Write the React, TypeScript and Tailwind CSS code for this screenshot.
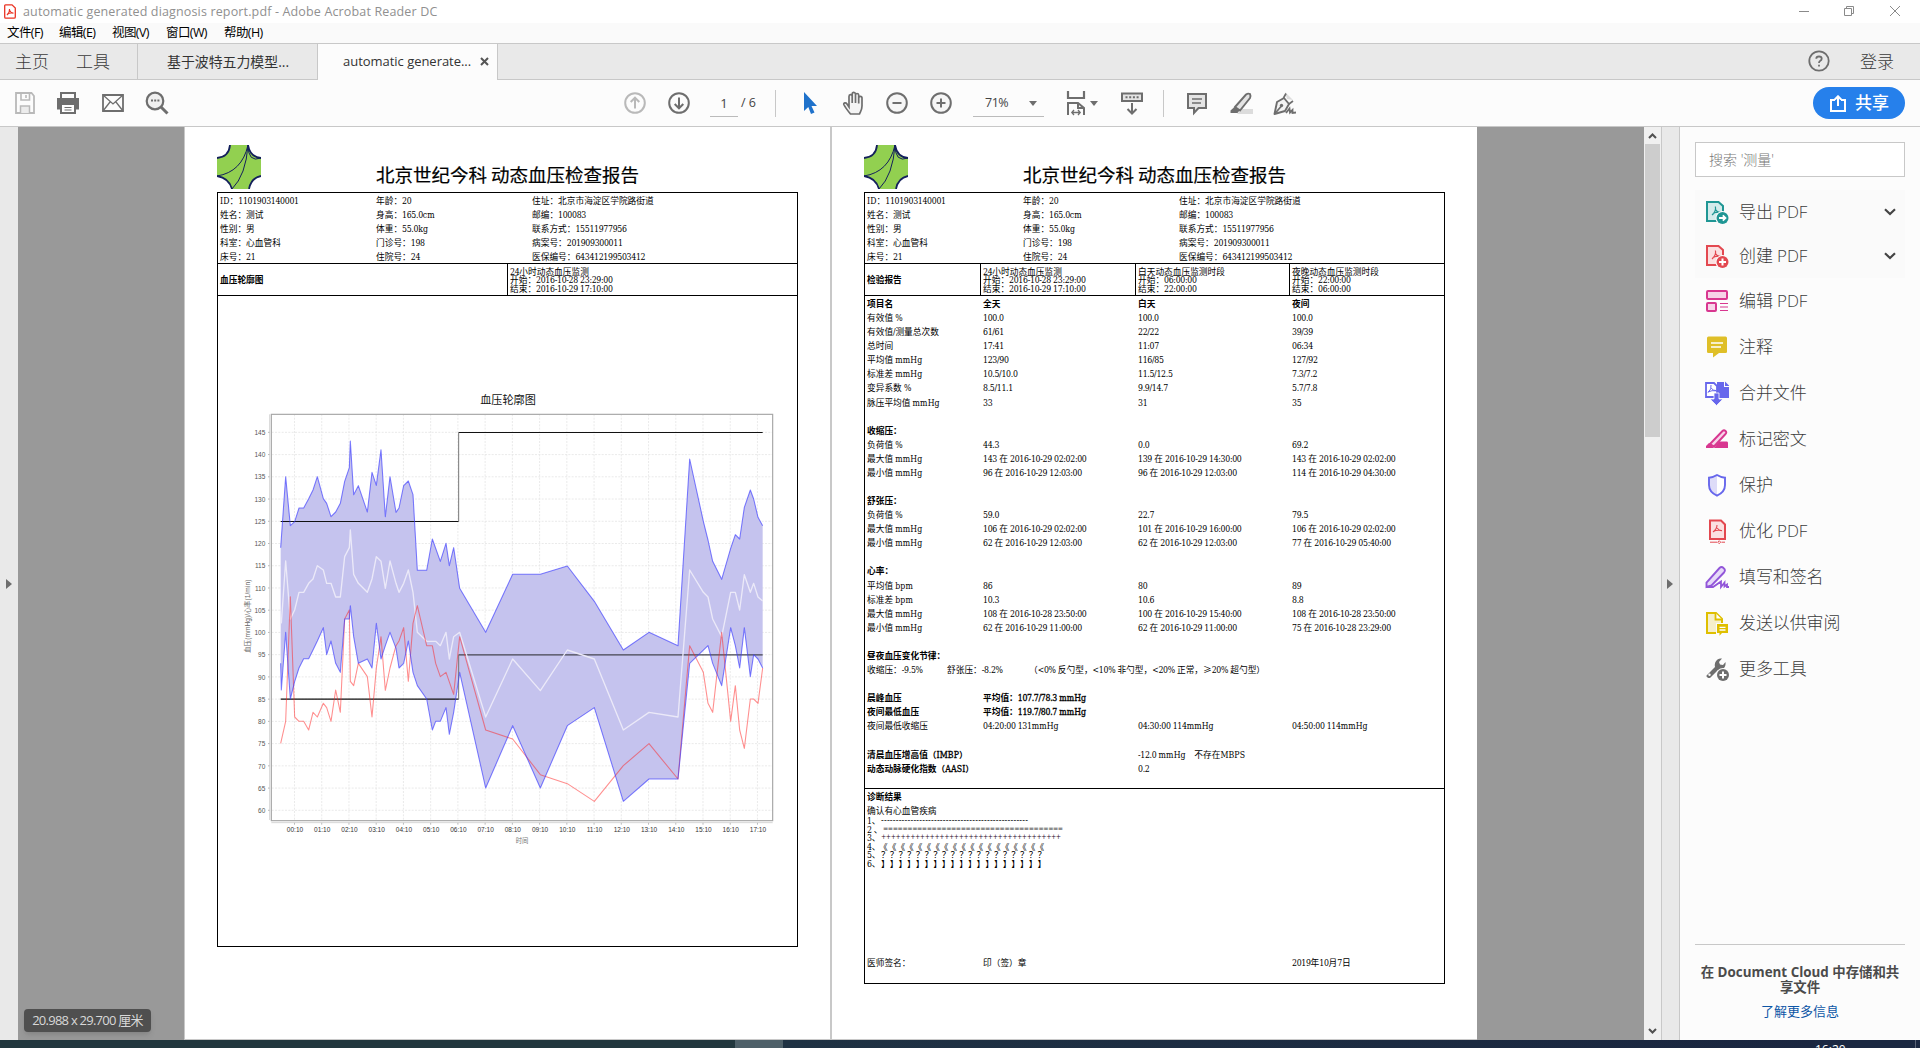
import React from "react";

const UI = "font-['Open_Sans','Noto_Sans_CJK_SC',sans-serif]";
const LATIN = "font-['DejaVu_Serif_Condensed','DejaVu_Serif',serif] [font-stretch:condensed] font-normal";

/* Latin runs in the report use a serif face, Chinese runs a sans face. */
function R({ t, b }: { t: string; b?: boolean }) {
  const parts = t.match(/[A-Za-z]+|[\x20-\x40\x5b-\x60\x7b-\x7e]+|[^\x20-\x7e]+/g) || [];
  return (
    <span className={"whitespace-pre [text-spacing-trim:space-all] " + (b ? "font-semibold" : "")}>
      {parts.map((p, i) =>
        /^[\x20-\x7e]/.test(p) ? (
          <span
            key={i}
            className={
              LATIN +
              " text-[8.7px] " +
              (/^[A-Za-z]/.test(p) ? "tracking-[0.1px]" : "tracking-[-0.32px]") +
              (b ? " [-webkit-text-stroke:0.3px_#000]" : "")
            }
          >
            {p}
          </span>
        ) : (
          <span key={i}>{p}</span>
        )
      )}
    </span>
  );
}

function Logo() {
  return (
    <svg width="44" height="44" viewBox="0 0 44 44" className="block shrink-0">
      <path d="M13 0H31Q33 12 44 13V31Q34 33 32 44H15Q12 33 0 31V13Q12 11 13 0Z" fill="#92d050" />
      <g fill="none" stroke="#14205c" strokeWidth="1.3">
        <path d="M13 0Q12 12 0 13M31 0Q33 12 44 13M44 31Q34 33 32 44M15 44Q12 33 0 31" strokeWidth="1.8" />
        <path d="M31 0Q29 30 15 44M31 0Q25 27 0 31M31 0Q31 18 44 13" strokeWidth="1" />
      </g>
    </svg>
  );
}

const patient = [
  ["ID：1101903140001", "年龄：20", "住址：北京市海淀区学院路街道"],
  ["姓名：测试", "身高：165.0cm", "邮编：100083"],
  ["性别：男", "体重：55.0kg", "联系方式：15511977956"],
  ["科室：心血管科", "门诊号：198", "病案号：201909300011"],
  ["床号：21", "住院号：24", "医保编号：643412199503412"],
];

function PageHead() {
  return (
    <div className="flex h-[65px] pt-[18px]">
      <Logo />
      <h1 className="mr-[44px] flex-1 pt-[13px] text-center text-[18.5px] font-normal leading-[32px] [-webkit-text-stroke:0.2px_#000]">北京世纪今科 动态血压检查报告</h1>
    </div>
  );
}

function Patient() {
  return (
    <div className="h-[71px] border-b border-black pl-[2px] pt-[1px]">
      {patient.map((r) => (
        <div key={r[0]} className="grid h-[14px] grid-cols-[156px_156px_1fr] leading-[14px]">
          {r.map((c) => (
            <R key={c} t={c} />
          ))}
        </div>
      ))}
    </div>
  );
}

function Period({ lines }: { lines: string[] }) {
  return (
    <div className="flex flex-col border-l border-black pl-[2px] pt-[3.5px] leading-[8.8px]">
      {lines.map((l) => (
        <R key={l} t={l} />
      ))}
    </div>
  );
}

const sys = "122,503 137,290 151,437 164,425 177,384 191,384 206,356 219,330 232,290 250,356 260,370 273,410 287,396 301,370 314,304 328,263 331,183 341,344 355,317 382,396 396,277 409,316 423,209 436,410 450,290 468,397 477,384 491,317 505,303 519,344 532,571 560,571 577,477 601,544 618,490 628,557 641,503 659,625 737,757 818,583 901,583 982,558 1063,664 1150,810 1227,757 1314,797 1349,237 1390,424 1404,480 1418,544 1445,598 1472,505 1486,464 1499,477 1513,382 1531,330 1541,357 1554,412 1568,437";
const dia = "122,850 124,930 137,757 151,957 164,905 177,864 191,836 206,836 219,810 232,783 250,743 260,824 273,783 287,850 301,877 314,717 328,717 331,677 341,770 355,850 382,837 396,864 409,730 423,837 436,797 450,757 468,805 477,864 491,850 505,783 519,877 532,917 560,957 577,1050 587,1024 601,1024 618,983 628,1063 641,997 659,877 737,1224 818,1037 901,1224 982,1037 1063,983 1150,1264 1227,1197 1314,1197 1349,850 1404,797 1418,850 1445,917 1472,743 1486,797 1499,864 1513,743 1531,890 1541,824 1554,837 1568,864";
const mean = "124,730 137,543 151,717 164,690 177,637 191,637 206,610 219,597 232,557 250,570 260,610 273,610 287,651 301,651 314,530 328,503 331,450 341,583 355,610 382,637 396,597 409,530 423,544 436,625 450,543 468,610 477,637 491,610 505,570 519,637 532,757 560,784 587,784 601,797 618,757 628,837 641,770 659,757 737,1011 818,837 901,932 982,810 1063,837 1150,1050 1227,997 1314,1011 1349,570 1390,637 1404,651 1418,717 1445,770 1472,637 1486,637 1499,690 1513,584 1531,637 1541,610 1554,651 1568,663";
const rate = "122,1090 137,1024 151,650 164,1011 177,1024 191,1024 206,1050 219,997 232,1011 250,970 260,983 273,1024 287,930 301,997 314,717 328,690 331,904 341,917 355,850 382,890 396,1011 409,864 423,770 436,931 450,864 468,797 477,783 491,743 505,904 519,730 532,677 560,797 577,797 587,850 601,890 618,877 641,943 659,770 737,1050 818,1077 901,1184 982,1211 1063,1264 1150,1157 1227,1091 1314,1197 1349,797 1390,877 1404,970 1418,997 1445,757 1472,1024 1486,917 1499,1050 1513,1105 1531,957 1541,957 1554,970 1568,864";
const hours = ["00:10", "01:10", "02:10", "03:10", "04:10", "05:10", "06:10", "07:10", "08:10", "09:10", "10:10", "11:10", "12:10", "13:10", "14:10", "15:10", "16:10", "17:10"];
const levels = [145, 140, 135, 130, 125, 120, 115, 110, 105, 100, 95, 90, 85, 80, 75, 70, 65, 60];

function Chart() {
  return (
    <svg width="540" height="480" viewBox="0 0 1620 1440" className="ml-[22px] mt-[84px] block font-['Liberation_Sans','Noto_Sans_CJK_SC',sans-serif]">
      <text x="804" y="73" textAnchor="middle" fontSize="33.400" fill="#111" className="font-['Noto_Sans_CJK_SC',sans-serif]">血压轮廓图</text>
      {levels.map((v, i) => (
        <g key={v}>
          <path d={`M95 ${157 + i * 66.7}H1598`} stroke="#e6e6e6" strokeWidth="2.5" strokeDasharray="6 4" />
          <path d={`M84 ${157 + i * 66.7}H90`} stroke="#aaa" strokeWidth="2.5" />
          <text x="76" y={165 + i * 66.7} textAnchor="end" fontSize="19.5" fill="#555">{v}</text>
        </g>
      ))}
      {hours.map((h, i) => (
        <g key={h}>
          <path d={`M${163.5 + i * 81.7} 103V1322`} stroke="#e6e6e6" strokeWidth="2.5" strokeDasharray="6 4" />
          <path d={`M${163.5 + i * 81.7} 1328V1334`} stroke="#aaa" strokeWidth="2.5" />
          <text x={165 + i * 81.7} y="1355" textAnchor="middle" fontSize="19.5" fill="#333">{h}</text>
        </g>
      ))}
      <path d="M89 103V1320M94 1328H1598" stroke="#ccc" strokeWidth="2.5" />
      <rect x="94" y="103" width="1504" height="1219" fill="none" stroke="#a6a6a6" strokeWidth="3.5" />
      <polygon points={sys + " " + dia.split(" ").reverse().join(" ")} fill="#c5c3ee" />
      <g fill="none" strokeLinejoin="round">
        <path d="M122 424.5H656M656 157.5H1568M122 957.5H656" stroke="#111" strokeWidth="3.5" />
        <path d="M656 824.5H1568" stroke="#45454f" strokeWidth="4" />
        <path d="M656 424V157M656 957V824" stroke="#777" strokeWidth="3" />
        <polyline points={mean} stroke="#ebe9f8" strokeWidth="4" />
        <polyline points={rate} stroke="#ff2020" strokeOpacity=".5" strokeWidth="3.2" />
        <polyline points={sys} stroke="#3a3aff" strokeOpacity=".65" strokeWidth="3.2" />
        <polyline points={dia} stroke="#3a3aff" strokeOpacity=".65" strokeWidth="3.2" />
      </g>
      <text x="846" y="1388" textAnchor="middle" fontSize="19" fill="#777">时间</text>
      <text transform="translate(30 709) rotate(-90)" textAnchor="middle" fontSize="19.5" textLength="220" fill="#666">血压(mmHg)/心率(1/min)</text>
    </svg>
  );
}

type Row = { c?: string[]; b?: boolean; b2?: boolean };
const rows: Row[] = [
  { c: ["项目名", "全天", "白天", "夜间"], b: true, b2: true },
  { c: ["有效值 %", "100.0", "100.0", "100.0"] },
  { c: ["有效值/测量总次数", "61/61", "22/22", "39/39"] },
  { c: ["总时间", "17:41", "11:07", "06:34"] },
  { c: ["平均值 mmHg", "123/90", "116/85", "127/92"] },
  { c: ["标准差 mmHg", "10.5/10.0", "11.5/12.5", "7.3/7.2"] },
  { c: ["变异系数 %", "8.5/11.1", "9.9/14.7", "5.7/7.8"] },
  { c: ["脉压平均值 mmHg", "33", "31", "35"] },
  {},
  { c: ["收缩压："], b: true },
  { c: ["负荷值 %", "44.3", "0.0", "69.2"] },
  { c: ["最大值 mmHg", "143 在 2016-10-29 02:02:00", "139 在 2016-10-29 14:30:00", "143 在 2016-10-29 02:02:00"] },
  { c: ["最小值 mmHg", "96 在 2016-10-29 12:03:00", "96 在 2016-10-29 12:03:00", "114 在 2016-10-29 04:30:00"] },
  {},
  { c: ["舒张压："], b: true },
  { c: ["负荷值 %", "59.0", "22.7", "79.5"] },
  { c: ["最大值 mmHg", "106 在 2016-10-29 02:02:00", "101 在 2016-10-29 16:00:00", "106 在 2016-10-29 02:02:00"] },
  { c: ["最小值 mmHg", "62 在 2016-10-29 12:03:00", "62 在 2016-10-29 12:03:00", "77 在 2016-10-29 05:40:00"] },
  {},
  { c: ["心率："], b: true },
  { c: ["平均值 bpm", "86", "80", "89"] },
  { c: ["标准差 bpm", "10.3", "10.6", "8.8"] },
  { c: ["最大值 mmHg", "108 在 2016-10-28 23:50:00", "100 在 2016-10-29 15:40:00", "108 在 2016-10-28 23:50:00"] },
  { c: ["最小值 mmHg", "62 在 2016-10-29 11:00:00", "62 在 2016-10-29 11:00:00", "75 在 2016-10-28 23:29:00"] },
  {},
  { c: ["昼夜血压变化节律："], b: true },
  { c: ["RHYTHM"] },
  {},
  { c: ["晨峰血压", "平均值：107.7/78.3 mmHg"], b: true, b2: true },
  { c: ["夜间最低血压", "平均值：119.7/80.7 mmHg"], b: true, b2: true },
  { c: ["夜间最低收缩压", "04:20:00 131mmHg", "04:30:00 114mmHg", "04:50:00 114mmHg"] },
  {},
  { c: ["清晨血压增高值（IMBP）", "", "-12.0 mmHg　不存在MBPS"], b: true },
  { c: ["动态动脉硬化指数（AASI）", "", "0.2"], b: true },
];

const notes: [string, string, string][] = [
  ["1、", "-".repeat(50), "tracking-[0.21px] pl-[14px] text-[9px] font-['DejaVu_Serif_Condensed','DejaVu_Serif',serif] [font-stretch:condensed]"],
  ["2 、", "=".repeat(37), "tracking-[-0.42px] pl-[16px] text-[7px] text-[#333] font-['DejaVu_Serif_Condensed','DejaVu_Serif',serif] [font-stretch:condensed]"],
  ["3、", "+".repeat(37), "tracking-[-0.42px] pl-[14px] text-[7px] text-[#2a0a2a] font-['DejaVu_Serif_Condensed','DejaVu_Serif',serif] [font-stretch:condensed]"],
  ["4、", "《".repeat(19), "pl-[12px]"],
  ["5、", "？".repeat(19), "pl-[14px]"],
  ["6、", "】".repeat(19), "pl-[14px]"],
];

function ReportTable() {
  return (
    <>
      <div className="h-[493px] border-b border-black pl-[2px] pt-[1px]">
        {rows.map((r, i) => (
          <div key={i} className="grid h-[14.09px] grid-cols-[116px_155px_154px_1fr] leading-[14px]">
            {r.c && r.c[0] === "RHYTHM" ? (
              <div className="col-span-4 flex">
                <span className="w-[80px]"><R t="收缩压：-9.5%" /></span>
                <span className="w-[82px]"><R t="舒张压：-8.2%" /></span>
                <R t="（<0% 反勺型，<10% 非勺型，<20% 正常，≥20% 超勺型）" />
              </div>
            ) : (
              r.c?.map((c, j) => (
                <div key={j} className="w-0">
                  <R t={c} b={(j === 0 && r.b) || r.b2} />
                </div>
              ))
            )}
          </div>
        ))}
      </div>
      <div className="h-[194px] pl-[2px] pt-[1px] leading-[14px]">
        <div className="h-[14px]"><R t="诊断结果" b /></div>
        <div className="h-[12px]"><R t="确认有心血管疾病" /></div>
        {notes.map(([n, s, k], i) => (
          <div key={n} className="grid h-[8.6px] leading-[9px]">
            <span className="col-start-1 row-start-1"><R t={n} /></span>
            <span className={"col-start-1 row-start-1 whitespace-pre " + k}>{i < 3 ? s : <R t={s} />}</span>
          </div>
        ))}
        <div className="mt-[88px] grid h-[14px] grid-cols-[116px_309px_1fr]">
          <R t="医师签名：" />
          <R t="印（签）章" />
          <R t="2019年10月7日" />
        </div>
      </div>
    </>
  );
}

/* ---------- Tool panel icons ---------- */
const acro = "M7 15C10 12.5 11 9.5 10.4 6.5M10.8 9.8C12 12 14 13 16.5 12.6M8 13.5C10 12.3 13 11.8 15.5 12.2";

const tools: { t: string; icon: React.ReactNode; h: string; more?: boolean }[] = [
  { t: "导出 PDF", h: "h-[44px]", more: true, icon: (<>
    <path d="M2 2H13.500L18 6V21H2Z" fill="#d3ebeb" stroke="#1f9694" strokeWidth="2" /><path d={acro} fill="none" stroke="#1f9694" strokeWidth="1.2" />
    <circle cx="17.500" cy="18" r="7" fill="#fbfbfb" /><circle cx="17.500" cy="18" r="6" fill="#1f9694" /><path d="M14 18H20M17.800 15.300L20.500 18L17.800 20.700" stroke="#fff" strokeWidth="1.800" fill="none" /></>) },
  { t: "创建 PDF", h: "h-[44px]", more: true, icon: (<>
    <path d="M2 2H13.500L18 6V21H2Z" fill="#fbe0e1" stroke="#e34850" strokeWidth="2" /><path d={acro} fill="none" stroke="#e34850" strokeWidth="1.2" />
    <circle cx="17.500" cy="18" r="7" fill="#fbfbfb" /><circle cx="17.500" cy="18" r="6" fill="#e34850" /><path d="M14 18H21M17.500 14.500V21.500" stroke="#fff" strokeWidth="2" /></>) },
  { t: "编辑 PDF", h: "h-[46px]", icon: (<g fill="#f7d3e8" stroke="#d83790" strokeWidth="2">
    <rect x="2" y="2" width="20" height="8" rx="1" /><rect x="2" y="14" width="9" height="8" rx="1" /><path d="M15 14.500H23M15 18H23M15 21.500H23" strokeWidth="1.200" /></g>) },
  { t: "注释", h: "h-[46px]", icon: (<>
    <path d="M3.500 1.500H20.500Q22 1.500 22 3V17Q22 18 20.500 18H14L8 22.500V18H3.500Q2 18 2 17V3Q2 1.500 3.500 1.500Z" fill="#dfbf28" /><path d="M6 8H18M6 12H16" stroke="#fff" strokeWidth="1.500" /></>) },
  { t: "合并文件", h: "h-[46px]", icon: (<>
    <path d="M12 1H19V6H24V17H12Z" fill="#6767ec" /><path d="M20 0.500L24 4.500V5H20Z" fill="#6767ec" /><path d="M1 2H9L12 5V16H1Z" fill="#fff" stroke="#6767ec" strokeWidth="1.800" /><path d="M3 11.500Q7 8 6 4M6.200 7Q8 10 11 9.500M3 11Q7 9 11 9.800" stroke="#6767ec" fill="none" />
    <path d="M9 12H14V18H18L11.500 24.500L5 18H9Z" fill="#6767ec" stroke="#fbfbfb" strokeWidth=".8" /></>) },
  { t: "标记密文", h: "h-[46px]", icon: (<>
    <path d="M9 21L14 14.500H22Q23 14.500 23 16V21Z" fill="#d83790" /><path d="M5 17L17.500 4Q19 2.500 20.500 4Q22 5.500 20.500 7L9 19.500Z" fill="#f7d3e8" stroke="#d83790" strokeWidth="1.900" /><path d="M1 21V19L4 16L9 20.500L8 21Z" fill="#d83790" /></>) },
  { t: "保护", h: "h-[46px]", icon: (<>
    <path d="M12 2L20 5V12Q20 19 12 22.500Q4 19 4 12V5Z" fill="#fff" /><path d="M12 2L4 5V12Q4 19 12 22.500Z" fill="#dedcf8" /><path d="M12 2Q16 4.500 20 4.700V12Q20 19 12 22.700Q4 19 4 12V4.700Q8 4.500 12 2Z" fill="none" stroke="#6767ec" strokeWidth="1.900" /></>) },
  { t: "优化 PDF", h: "h-[46px]", icon: (<>
    <path d="M5 1.500H16L20 5.500V20H5Z" fill="#fbe0e1" stroke="#e34850" strokeWidth="2" /><path d="M8 13Q12 10 12 6M12.200 9Q14 12 17 11.500M8 12.700Q12 10.500 17 11.700" stroke="#e34850" fill="none" strokeWidth="1.100" /><path d="M5 23.200H12M16.500 23.200H20M14.200 21.700L15.700 23.200L14.200 24.700L12.700 23.200Z" stroke="#e34850" fill="none" /></>) },
  { t: "填写和签名", h: "h-[46px]", icon: (<>
    <path d="M1.500 22V17.500L14.500 3Q16.500 1 18.500 3Q21 5 19 7.500L6.500 20.500Z" fill="#e6d9f8" stroke="#9256d9" strokeWidth="1.900" /><path d="M1 22H8L16 16.500V22L19.500 17.500V21.500L22 19.500V22H24" fill="none" stroke="#9256d9" strokeWidth="1.800" /></>) },
  { t: "发送以供审阅", h: "h-[46px]", icon: (<>
    <path d="M2 2H11L17 8V22H2Z" fill="#f6efcc" stroke="#dfbf00" strokeWidth="2" /><path d="M10.500 2V8.500H17" fill="#fff" stroke="#dfbf00" strokeWidth="1.800" /><rect x="11" y="12" width="13" height="11" fill="#fbfbfb" /><path d="M12 13H23V22H17L14.500 24.800V22H12Z" fill="#dfbf00" /><path d="M14.500 16.300H20.500M14.500 19H20.500" stroke="#fff" strokeWidth="1.300" /></>) },
  { t: "更多工具", h: "h-[46px]", icon: (<>
    <path d="M1.500 18.500L10 10Q9 5 12.500 2.500Q14.500 1 17 1.500L14 5L15 7.500L18 8L20.500 5Q21 9 18.500 11.500Q16 13.500 13 13L5.500 20.500Q4 21.500 2.500 20.500Q1 19.500 1.500 18.500Z" fill="#6e6e6e" /><circle cx="4.500" cy="17.800" r="1.200" fill="#fbfbfb" /><circle cx="18" cy="18" r="7" fill="#fbfbfb" /><circle cx="18" cy="18" r="6" fill="#6e6e6e" /><path d="M14.500 18H21.500M18 14.500V21.500" stroke="#fff" strokeWidth="2" /></>) },
];

function Ic({ w = 24, h = 26, className, children }: { w?: number; h?: number; className?: string; children: React.ReactNode }) {
  return (
    <svg width={w} height={h} viewBox={`0 0 ${w} ${h}`} fill="none" stroke="#6e6e6e" strokeWidth="2" className={"block shrink-0 " + (className || "")}>
      {children}
    </svg>
  );
}

export default function App() {
  return (
    <div className={"flex h-[1048px] w-[1920px] flex-col overflow-hidden bg-white text-[#444] " + UI}>
      {/* Title bar */}
      <div className="flex h-[23px] shrink-0 items-center bg-white pl-[4px]">
        <svg width="12" height="15" viewBox="0 0 12 15" className="mr-[7px] shrink-0" fill="none" stroke="#ea3323">
          <path d="M1.600 .8H8L11.300 4V13Q11.300 14.200 10 14.200H1.600Q.7 14.200 .7 13V2Q.7 .8 1.600 .8Z" strokeWidth="1.300" />
          <path d="M3 11Q6 8 5.500 5M5.700 6.500Q7 9.200 9.500 9M3 10.500Q6 8.500 9.500 9.300" strokeWidth="1.100" />
        </svg>
        <span className="whitespace-nowrap text-[12.5px] leading-[20px] tracking-[0.15px] text-[#909090]">automatic generated diagnosis report.pdf - Adobe Acrobat Reader DC</span>
        <svg width="104" height="12" viewBox="0 0 104 12" className="ml-auto mr-[18px] -mt-[2px]" fill="none" stroke="#8a8a8a">
          <path d="M1 6.500H11M46.500 3.500H53.500V10.500H46.500ZM48.500 3.500V1.500H55.500V8.500H53.500M92 1L102 11M102 1L92 11" />
        </svg>
      </div>
      {/* Menu bar */}
      <div className="flex h-[20px] shrink-0 gap-[14px] bg-[#fafafa] pl-[7px] text-[12.5px] leading-[19px] tracking-[-0.6px] text-black">
        <span className="w-[38px] whitespace-nowrap">文件(F)</span>
        <span className="w-[39px] whitespace-nowrap">编辑(E)</span>
        <span className="w-[40px] whitespace-nowrap">视图(V)</span>
        <span className="w-[44px] whitespace-nowrap">窗口(W)</span>
        <span className="whitespace-nowrap">帮助(H)</span>
      </div>
      {/* Tabs */}
      <div className="flex h-[37px] shrink-0 border-b border-t border-[#c8c8c8] bg-[#e9e9e9] leading-[35px]">
        <div className="flex w-[138px] gap-[27px] border-r border-[#c8c8c8] pl-[15px] text-[17px] font-light text-[#3b3b3b]">
          <span>主页</span>
          <span>工具</span>
        </div>
        <div className="w-[180px] border-r border-[#c8c8c8] pl-[29px] text-[13.900px] text-[#333]">基于波特五力模型...</div>
        <div className="-mb-px flex w-[180px] border-r border-[#c8c8c8] bg-[#fcfcfc] pl-[25px] text-[13px] text-[#333]">
          <span className="w-[137px] whitespace-nowrap tracking-[-0.03px]">automatic generate...</span>
          <svg width="9" height="9" viewBox="0 0 9 9" className="mt-[13px]" stroke="#555" strokeWidth="2"><path d="M1 1L8 8M8 1L1 8" /></svg>
        </div>
        <div className="ml-auto mr-[26px] flex">
          <svg width="22" height="22" viewBox="0 0 22 22" className="mr-[30px] mt-[6px]" fill="none" stroke="#6e6e6e" strokeWidth="1.800">
            <circle cx="11" cy="11" r="9.700" />
            <path d="M8.300 8.700Q8.300 6.500 11 6.500Q13.700 6.500 13.700 8.700Q13.700 10 12 11Q11 11.600 11 13M11 14.700V16.500" />
          </svg>
          <span className="text-[17px] font-light text-[#3b3b3b]">登录</span>
        </div>
      </div>
      {/* Toolbar */}
      <div className="flex h-[47px] shrink-0 items-center border-b border-[#c8c8c8] bg-[#fcfcfc] text-[13px]">
        <Ic className="ml-[13px]">
          <path d="M3 3H18.500L21 6V23H3Z" stroke="#b9b9b9" strokeWidth="1.800" /><path d="M8 3V10H16.500V3M13 5V8" stroke="#b9b9b9" strokeWidth="1.600" /><path d="M7.500 23V16H16.500V23" stroke="#b9b9b9" strokeWidth="1.500" fill="#ececec" />
        </Ic>
        <Ic className="ml-[19px]">
          <path d="M5 9V3H19V9" /><path d="M1 8H23V19.500H19V14H5V19.500H1Z" fill="#6e6e6e" stroke="none" /><path d="M5 14H19V23H5Z" fill="#fff" /><path d="M8.500 17.500H15.500M8.500 20H15.500" strokeWidth="1.200" />
        </Ic>
        <Ic className="ml-[21px]">
          <path d="M2 5H22V21H2Z" strokeWidth="1.800" /><path d="M2 5L12 14L22 5M2 21L9 12M22 21L15 12" strokeWidth="1.300" />
        </Ic>
        <Ic className="ml-[20px]">
          <circle cx="10" cy="11" r="8.300" fill="#f0f0f0" strokeWidth="2.200" /><path d="M16 17L22.500 23.500" strokeWidth="3" /><path d="M6 10.500H14.500" strokeDasharray="2 1.200" />
        </Ic>
        <Ic className="ml-[454px]">
          <g stroke="#b9b9b9"><circle cx="12" cy="13" r="9.800" /><path d="M12 18.500V8M7.700 12L12 7.700L16.300 12" /></g>
        </Ic>
        <Ic className="ml-[20px]">
          <circle cx="12" cy="13" r="9.800" /><path d="M12 7.500V18M7.700 14L12 18.300L16.300 14" />
        </Ic>
        <div className="ml-[19px] mt-[1px] h-[27px] w-[28px] border-b border-[#bbb] text-center leading-[27px]">1</div>
        <span className="ml-[3px] w-[15px] whitespace-nowrap text-[12.500px]">/ 6</span>
        <div className="ml-[19px] h-[27px] w-px bg-[#c8c8c8]" />
        <Ic className="ml-[24px]"><path d="M4 2V21L8.300 17L11 24L14.500 22.500L11.500 16H17Z" fill="#1f72cb" stroke="none" /></Ic>
        <Ic className="ml-[18px]">
          <path d="M8.500 24C6 21 3.500 18 1.800 14.500C1.500 12.500 4 12.500 5 14L7 17V6.500C7 4 10 4 10.200 6V13V4C10.200 1.700 13.300 1.700 13.500 4V13V5C13.500 3 16.500 3 16.700 5V13.500V8C16.700 5.800 20 5.800 20 8V16C20 20 18.500 21.500 17.500 24Z" fill="#f4f4f4" strokeWidth="1.700" />
        </Ic>
        <Ic className="ml-[19px]"><circle cx="12" cy="13" r="9.800" fill="#f6f6f6" /><path d="M7.500 13H16.500" /></Ic>
        <Ic className="ml-[20px]"><circle cx="12" cy="13" r="9.800" fill="#f6f6f6" /><path d="M7.500 13H16.500M12 8.500V17.500" /></Ic>
        <div className="ml-[20px] mt-[1px] flex h-[27px] w-[71px] items-center border-b border-[#bbb] pl-[12px] text-[12.500px] tracking-[-0.5px]">
          71%<span className="ml-[21px] border-x-[4px] border-t-[5px] border-x-transparent border-t-[#6e6e6e]" />
        </div>
        <Ic className="ml-[20px]">
          <path d="M4 1V8H20V1" strokeWidth="2.200" /><path d="M4 25V13H14L20 18V25M14 13V18H20" /><path d="M8 22.500H16M10 20L7.800 22.500L10 25M14 20L16.200 22.500L14 25" strokeWidth="1.300" />
        </Ic>
        <span className="ml-[2px] border-x-[4px] border-t-[5px] border-x-transparent border-t-[#6e6e6e]" />
        <Ic className="ml-[22px]">
          <path d="M2 3.500H22V11H2Z" fill="#e4e4e4" /><path d="M5.500 7.300H19" strokeDasharray="2 1.700" /><path d="M12 13V23M7.500 19L12 23.500L16.500 19" />
        </Ic>
        <div className="ml-[19px] h-[27px] w-px bg-[#c8c8c8]" />
        <Ic className="ml-[21px]"><path d="M3 4H21V18H13.500L9 23V18H3Z" fill="#e4e4e4" /><path d="M7 9H17M7 13H16" strokeWidth="1.500" /></Ic>
        <Ic className="ml-[20px]">
          <path d="M8 24L13 19H24V24Z" fill="#dcdcdc" stroke="none" /><path d="M6 17L17 4.500Q19 3 21 4Q22 6 21 8L11 20.500Z" fill="#e4e4e4" strokeWidth="1.900" /><path d="M1.500 23V20.500L5.500 17L10.500 20.500L8.500 23Z" fill="#6e6e6e" stroke="none" />
        </Ic>
        <Ic className="ml-[19px]">
          <path d="M13 2L21 10L15 9Z" fill="#dcdcdc" stroke="none" /><path d="M2.500 24L5 12L12 8L17 14L13 21Z" fill="#f4f4f4" strokeWidth="1.900" strokeLinejoin="round" /><path d="M11.500 8L14 3.500M17 14L21 11M3 23.500L9 16.500" strokeWidth="1.700" /><circle cx="9.500" cy="15.500" r="1.700" fill="#6e6e6e" stroke="none" /><path d="M14 23L17.500 18.500L18 22.500L20.500 20V23L24 22.500" strokeWidth="1.800" />
        </Ic>
        <div className="ml-auto mr-[15px] flex h-[32px] w-[92px] items-center rounded-full bg-[#2680eb] pl-[17px] text-[17px] font-medium leading-[32px] text-white">
          <svg width="16" height="17" viewBox="0 0 16 17" fill="none" stroke="#fff" strokeWidth="2" className="mr-[9px] shrink-0"><path d="M5 5H1V16H15V5H11M8 11V2M4.800 4.500L8 1.300L11.200 4.500" /></svg>
          共享
        </div>
      </div>
      {/* Workspace */}
      <div className="relative flex h-[913px] shrink-0">
        <div className="flex w-[18px] items-center bg-[#e9e9e9] pl-[6px]">
          <span className="border-y-[5px] border-l-[6px] border-y-transparent border-l-[#6e6e6e]" />
        </div>
        <div className="flex w-[1626px] bg-[#999] pl-[166px] text-[8.700px] text-black font-['Noto_Sans_CJK_SC',sans-serif]">
          <div className="h-[913px] w-[646px] border-b border-l border-[#c8c8c8] bg-white pl-[32px]">
            <div className="w-[581px]">
              <PageHead />
              <div className="h-[755px] w-[581px] border border-black">
                <Patient />
                <div className="grid h-[32px] grid-cols-[289px_1fr] border-b border-black">
                  <span className="pl-[2px] leading-[32px]"><R t="血压轮廓图" b /></span>
                  <Period lines={["24小时动态血压监测", "开始：2016-10-28 23:29:00", "结束：2016-10-29 17:10:00"]} />
                </div>
                <Chart />
              </div>
            </div>
          </div>
          <div className="h-[913px] w-[2px] bg-[#c8c8c8]" />
          <div className="h-[913px] w-[645px] border-b border-[#c8c8c8] bg-white pl-[32px]">
            <div className="w-[581px]">
              <PageHead />
              <div className="h-[792px] w-[581px] border border-black">
                <Patient />
                <div className="grid h-[32px] grid-cols-[115px_155px_154px_1fr] border-b border-black">
                  <span className="pl-[2px] leading-[32px]"><R t="检验报告" b /></span>
                  <Period lines={["24小时动态血压监测", "开始：2016-10-28 23:29:00", "结束：2016-10-29 17:10:00"]} />
                  <Period lines={["白天动态血压监测时段", "开始：06:00:00", "结束：22:00:00"]} />
                  <Period lines={["夜晚动态血压监测时段", "开始：22:00:00", "结束：06:00:00"]} />
                </div>
                <ReportTable />
              </div>
            </div>
          </div>
        </div>
        {/* Scrollbar */}
        <div className="flex w-[18px] flex-col items-center border-r border-[#c8c8c8] bg-[#f0f0f0]">
          <svg width="15" height="17" viewBox="0 0 15 17" fill="none" stroke="#505050" strokeWidth="2"><path d="M4 11L7.500 7.500L11 11" /></svg>
          <div className="h-[293px] w-[15px] bg-[#cdcdcd]" />
          <svg width="15" height="17" viewBox="0 0 15 17" fill="none" stroke="#505050" strokeWidth="2" className="mt-auto"><path d="M4 6L7.500 9.500L11 6" /></svg>
        </div>
        <div className="flex w-[18px] items-center border-r border-[#c8c8c8] bg-[#e9e9e9] pl-[5px]">
          <span className="border-y-[5px] border-l-[6px] border-y-transparent border-l-[#6e6e6e]" />
        </div>
        {/* Tool panel */}
        <div className="flex flex-1 flex-col bg-[#fcfcfc] px-[15px] pt-[15px]">
          <div className="h-[35px] w-[210px] shrink-0 border border-[#c8c8c8] bg-white pl-[13px] text-[14px] font-light leading-[33px] text-[#777]">搜索 '测量'</div>
          <div className="mt-[13px]">
            {tools.map((t) => (
              <div key={t.t} className={"flex w-[210px] items-center pl-[10px] " + t.h + (t.more ? " bg-[#fafafa]" : "")}>
                <svg width="24" height="25" viewBox="0 0 24 25" className="mr-[10px] shrink-0" fill="none">{t.icon}</svg>
                <span className="whitespace-nowrap text-[17px] font-light leading-[24px] tracking-[-0.1px] text-[#3b3b3b]">{t.t}</span>
                {t.more && (
                  <svg width="12" height="8" viewBox="0 0 12 8" className="ml-auto mr-[9px]" fill="none" stroke="#444" strokeWidth="2.200"><path d="M1 1.300L6 6L11 1.300" /></svg>
                )}
              </div>
            ))}
          </div>
          <div className="mt-auto h-[96px] w-[210px] shrink-0 border-t border-[#c8c8c8] pt-[20px] text-center">
            <p className="text-[13.400px] font-bold leading-[15px] text-[#4b4b4b]">在 Document Cloud 中存储和共<br />享文件</p>
            <p className="mt-[7px] text-[13px] leading-[18px] text-[#0d56a6]">了解更多信息</p>
          </div>
        </div>
        {/* Page size badge */}
        <div className="absolute bottom-[8px] left-[24px] h-[23px] w-[127px] whitespace-nowrap rounded-[4px] bg-[#4f4f4f] text-center text-[13px] leading-[23px] tracking-[-0.75px] text-[#d8d8d8] shadow-md">20.988 x 29.700 厘米</div>
      </div>
      {/* Taskbar */}
      <div className="flex h-[8px] shrink-0 bg-[#1b2842]">
        <div className="w-[735px] bg-[#22373e]" />
        <div className="w-[48px] bg-[#4e6069]" />
        <div className="w-[1032px] bg-gradient-to-r from-[#1f3243] to-[#1a2640]" />
        <div className="w-[100px] overflow-hidden pt-[2px] text-[12px] leading-[16px] text-white">16:20</div>
        <div className="w-px bg-[#5b6478]" />
      </div>
    </div>
  );
}
